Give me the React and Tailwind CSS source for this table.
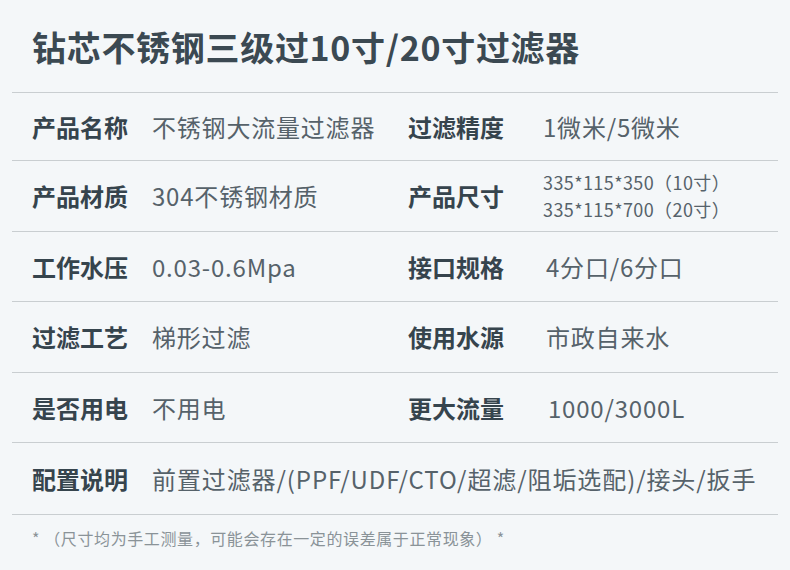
import React from "react";

const rows = [
  { h: "h-[68px]", label: "产品名称", value: "不锈钢大流量过滤器", rLabel: "过滤精度", rValue: "1微米/5微米", off: "" },
  { h: "h-[71px]", label: "产品材质", value: "304不锈钢材质", rLabel: "产品尺寸", sizes: ["335*115*350（10寸）", "335*115*700（20寸）"], off: "" },
  { h: "h-[70px]", label: "工作水压", value: "0.03-0.6Mpa", rLabel: "接口规格", rValue: "4分口/6分口", off: "ml-[3px]" },
  { h: "h-[71px]", label: "过滤工艺", value: "梯形过滤", rLabel: "使用水源", rValue: "市政自来水", off: "ml-[3px]" },
  { h: "h-[70px]", label: "是否用电", value: "不用电", rLabel: "更大流量", rValue: "1000/3000L", off: "ml-[5px]" },
];

const Row = ({ row }) => (
  <div className={`${row.h} border-b border-[#c9ced1] pl-5 flex items-center`}>
    <div className="w-[376px] flex items-center">
      <span className="w-[120px] text-[24px] font-bold text-[#36444d]">{row.label}</span>
      <span className="text-[24px] tracking-[0.8px] text-[#56626a]">{row.value}</span>
    </div>
    <div className="flex items-center">
      <span className="w-[135px] text-[24px] font-bold text-[#36444d]">{row.rLabel}</span>
      {row.sizes ? (
        <div className="flex flex-col text-[18px] leading-[27px] tracking-[0.4px] text-[#56626a]">
          {row.sizes.map((s) => (
            <span key={s}>{s}</span>
          ))}
        </div>
      ) : (
        <span className={`${row.off} text-[24px] tracking-[0.8px] text-[#56626a]`}>{row.rValue}</span>
      )}
    </div>
  </div>
);

const App = () => {
  return (
    <div className="w-[790px] h-[570px] bg-[#f4f7f9] font-['Noto_Sans_CJK_SC','Noto_Sans',sans-serif] overflow-hidden">
      <h1 className="h-[92px] pl-8 flex items-center text-[34px] font-bold tracking-[0.7px] text-[#3b4952]">
        钻芯不锈钢三级过10寸/20寸过滤器
      </h1>
      <div className="mx-3 border-t border-[#c9ced1]">
        {rows.map((row) => (
          <Row key={row.label} row={row} />
        ))}
        <div className="h-[72px] border-b border-[#c9ced1] pl-5 flex items-center">
          <span className="w-[120px] text-[24px] font-bold text-[#36444d]">配置说明</span>
          <span className="text-[24px] tracking-[0.9px] text-[#56626a]">前置过滤器/(PPF/UDF/CTO/超滤/阻垢选配)/接头/扳手</span>
        </div>
      </div>
      <p className="pl-8 pt-[11px] text-[16px] tracking-[0.6px] text-[#8a9398] whitespace-pre">
        {"* （尺寸均为手工测量，可能会存在一定的误差属于正常现象） *"}
      </p>
    </div>
  );
};

export default App;
